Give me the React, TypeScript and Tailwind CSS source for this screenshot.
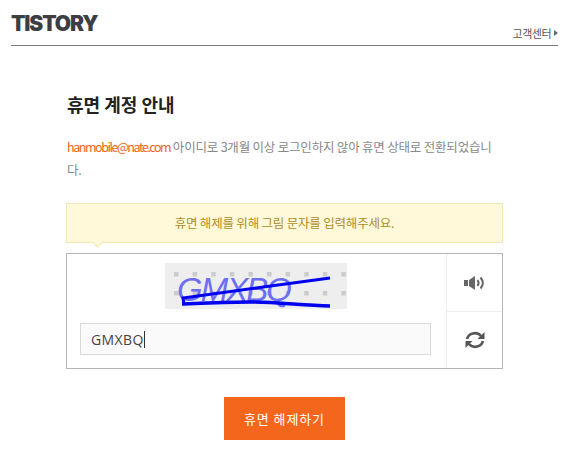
export default function App() {
  const dots: [number, number][] = [];
  for (let r = 0; r < 2; r++) for (let c = 0; c < 10; c++) dots.push([11 + c * 18.6, 11 + r * 19]);
  return (
    <div className="w-[580px] h-[460px] overflow-hidden bg-white font-['Noto_Sans_CJK_KR','Noto_Sans',sans-serif] tracking-[-0.2px]">
      <header className="ml-[11px] mr-[22px] h-[46px] border-b border-[#7a7a7a] flex justify-between items-start">
        <div className="mt-[13px] h-[22px] leading-[22px] text-[21px] font-black text-[#3c3e44] font-['Inter',sans-serif] tracking-[-1.1px]">TISTORY</div>
        <div className="mt-[26px] flex items-center gap-[3px] text-[11px] leading-[14px] text-[#555] tracking-[-0.5px]">
          고객센터
          <span className="block w-0 h-0 border-y-[3px] border-y-transparent border-l-[4px] border-l-[#666]" />
        </div>
      </header>
      <main className="ml-[66px] w-[437px]">
        <h1 className="mt-[45px] pl-px text-[18px] leading-[26px] font-bold text-[#222] tracking-[0px]">휴면 계정 안내</h1>
        <p className="mt-[18px] pl-px w-[432px] break-all text-[12.5px] leading-[23px] text-[#888]">
          <span className="text-[#f26522] tracking-[-1.45px]">hanmobile@nate.com</span> 아이디로 3개월 이상 로그인하지 않아 휴면 상태로 전환되었습니다.
        </p>
        <div className="relative mt-[22px] h-[40px] border border-[#f1e8b8] bg-[#fff9d9] flex items-center justify-center text-[12.5px] text-[#ae8c28]">
          휴면 해제를 위해 그림 문자를 입력해주세요.
          <span className="absolute left-[26px] top-[33px] w-[9px] h-[9px] rotate-45 bg-[#fff9d9] border-r border-b border-[#f1e8b8]" />
        </div>
        <div className="mt-[10px] h-[116px] border border-[#b5b5b5] flex">
          <div className="flex-1 flex flex-col items-center pr-[2px]">
            <svg className="mt-[9px] block" width="182" height="46" viewBox="0 0 182 46">
              <rect width="182" height="46" fill="#eeeeee" />
              {dots.map(([x, y], i) => (
                <rect key={i} x={x - 2} y={y - 2} width="4.5" height="4.5" fill="#cccccc" />
              ))}
              <text x="12" y="38" fontFamily="'Liberation Sans', sans-serif" fontStyle="italic" fontSize="33" fill="#6d6ff2" letterSpacing="-2">GMXBQ</text>
              <path d="M19 41 L18 35 L165 15" stroke="#0000f0" strokeWidth="3" fill="none" />
              <path d="M17 41 C45 40 65 39 85 39 C110 39 135 42 165 43" stroke="#0000f0" strokeWidth="3.6" fill="none" />
            </svg>
            <div className="mt-[14px] w-[351px] h-[32px] border border-[#d9d9d9] bg-[#fafafa] flex items-center pl-[10px] text-[14px] text-[#444] tracking-[0.4px] font-['Open_Sans',sans-serif]">
              GMXBQ<span className="w-px h-[17px] bg-[#333]" />
            </div>
          </div>
          <div className="w-[56px] border-l border-[#eeeeee] flex flex-col">
            <div className="h-[58px] border-b border-[#eeeeee] flex items-center justify-center">
              <svg width="22" height="16" viewBox="0 0 22 16">
                <rect x="0" y="5" width="4" height="6" fill="#666" />
                <path d="M5 5 L11 1 V15 L5 11 Z" fill="#666" />
                <path d="M13.5 5 C15 7 15 9 13.5 11" stroke="#666" strokeWidth="2" fill="none" />
                <path d="M16.5 2.5 C19.5 6 19.5 10 16.5 13.5" stroke="#666" strokeWidth="2" fill="none" />
              </svg>
            </div>
            <div className="flex-1 flex items-center justify-center">
              <svg width="22" height="20" viewBox="0 0 22 20">
                <path d="M3 9 A8 7.5 0 0 1 17 6" stroke="#555" strokeWidth="2.6" fill="none" />
                <path d="M20.5 2 V9 H13.5 Z" fill="#555" />
                <path d="M19 11 A8 7.5 0 0 1 5 14" stroke="#555" strokeWidth="2.6" fill="none" />
                <path d="M1.5 18 V11 H8.5 Z" fill="#555" />
              </svg>
            </div>
          </div>
        </div>
        <div className="mt-[28px] flex justify-center">
          <button className="w-[121px] h-[43px] bg-[#f4661b] text-white text-[13px] tracking-[0.9px]">휴면 해제하기</button>
        </div>
      </main>
    </div>
  );
}
